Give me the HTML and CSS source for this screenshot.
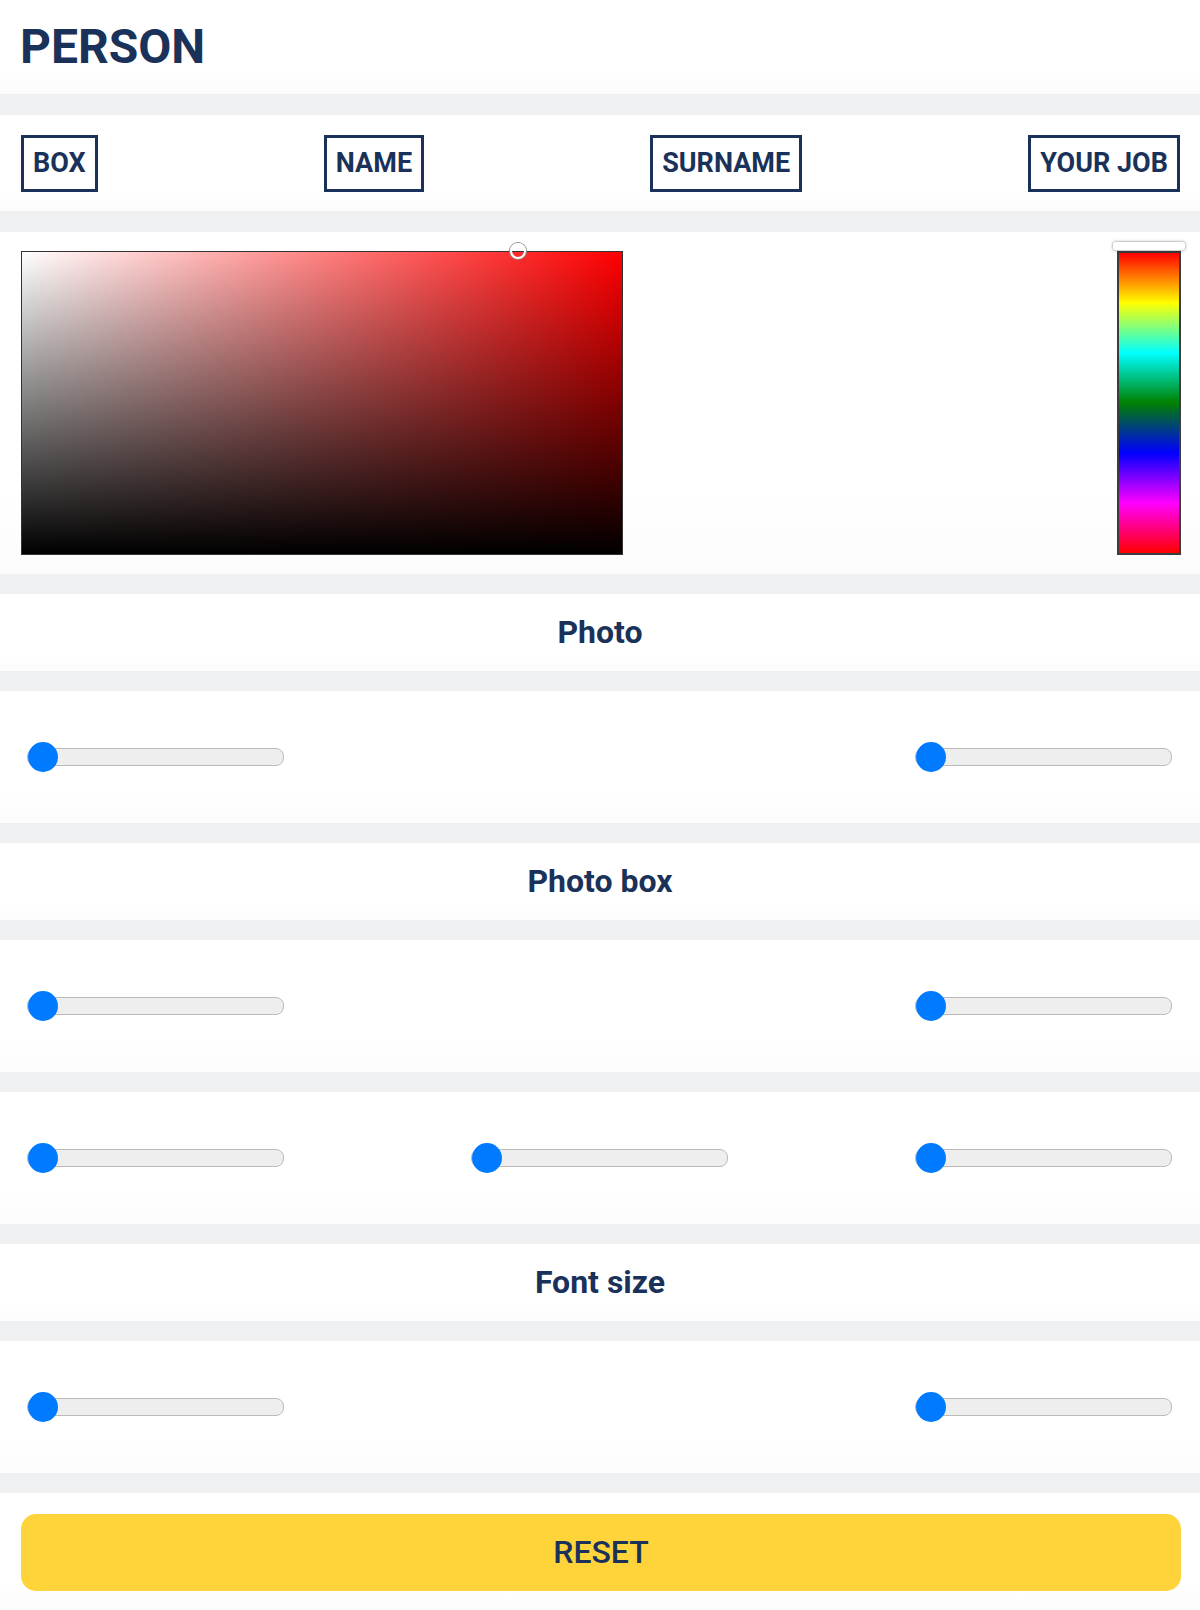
FILE: index.html
```html
<!DOCTYPE html>
<html lang="en">

<head>
    <meta charset="UTF-8">
    <meta name="viewport" content="width=device-width, initial-scale=1.0">
    <title>Person Card Editor</title>
    <link rel="stylesheet" href="styles.css">
</head>

<body>
    <!-- Title -->
    <header class="panel panel-title">
        <h1>PERSON</h1>
    </header>

    <!-- Part selector -->
    <section class="panel panel-tabs">
        <button class="tab">BOX</button>
        <button class="tab">NAME</button>
        <button class="tab">SURNAME</button>
        <button class="tab">YOUR JOB</button>
    </section>

    <!-- Colour picker -->
    <section class="panel panel-color">
        <div class="sv-box">
            <span class="sv-cursor"></span>
        </div>
        <div class="hue-bar">
            <span class="hue-handle"></span>
        </div>
    </section>

    <!-- Photo -->
    <section class="panel panel-heading">
        <h2>Photo</h2>
    </section>
    <section class="panel panel-sliders">
        <input type="range" class="slider" min="0" max="100" value="0">
        <input type="range" class="slider" min="0" max="100" value="0">
    </section>

    <!-- Photo box -->
    <section class="panel panel-heading">
        <h2>Photo box</h2>
    </section>
    <section class="panel panel-sliders">
        <input type="range" class="slider" min="0" max="100" value="0">
        <input type="range" class="slider" min="0" max="100" value="0">
    </section>
    <section class="panel panel-sliders">
        <input type="range" class="slider" min="0" max="100" value="0">
        <input type="range" class="slider" min="0" max="100" value="0">
        <input type="range" class="slider" min="0" max="100" value="0">
    </section>

    <!-- Font size -->
    <section class="panel panel-heading">
        <h2>Font size</h2>
    </section>
    <section class="panel panel-sliders">
        <input type="range" class="slider" min="0" max="100" value="0">
        <input type="range" class="slider" min="0" max="100" value="0">
    </section>

    <!-- Reset -->
    <section class="panel panel-reset">
        <button class="reset">RESET</button>
    </section>
</body>

</html>
```

FILE: styles.css
```css
body {
    font-family: Roboto, "Liberation Sans", Arial, sans-serif;
    background-color: #eff0f2;
    color: #1a3259;
    margin: 0;
    padding: 0;
}

.panel {
    background: linear-gradient(#ffffff 75%, #fcfcfc);
    margin-bottom: 20px;
}

.panel:last-child {
    margin-bottom: 0;
}

/* Title */
.panel-title {
    padding: 20px;
    margin-bottom: 21px;
}

h1 {
    margin: 0;
    font-size: 48px;
    line-height: 54px;
    font-weight: 700;
}

/* Part selector */
.panel-tabs {
    display: flex;
    justify-content: space-between;
    padding: 20px 20px 19px 21px;
    margin-bottom: 21px;
}

.tab {
    background: #ffffff;
    border: 3px solid #1a3259;
    color: #1a3259;
    font-family: inherit;
    font-size: 27px;
    font-weight: 700;
    line-height: 31px;
    padding: 10px 9px;
    margin: 0;
    cursor: pointer;
}

/* Colour picker */
.panel-color {
    display: flex;
    justify-content: space-between;
    align-items: flex-start;
    padding: 19px 19px 19px 21px;
}

.sv-box {
    position: relative;
    width: 600px;
    height: 302px;
    border: 1px solid #333333;
    background:
        linear-gradient(to top, #000000, rgba(0, 0, 0, 0)),
        linear-gradient(to right, #ffffff, #ff0000);
}

.sv-cursor {
    position: absolute;
    left: 488px;
    top: -9px;
    width: 12px;
    height: 12px;
    border: 2px solid #ffffff;
    border-radius: 50%;
    box-shadow: 0 0 0 1px #8a8a8a;
}

.hue-bar {
    position: relative;
    width: 60px;
    height: 300px;
    border: 2px solid #3c3c3c;
    background: linear-gradient(#ff0000, #ffff00, #00ffff, #008000, #0000ff, #ff00ff, #ff0000);
}

.hue-handle {
    position: absolute;
    left: -6px;
    right: -6px;
    top: -11px;
    height: 8px;
    background: #ffffff;
    border-radius: 2px;
    box-shadow: 0 0 3px rgba(0, 0, 0, 0.55);
}

/* Section headings */
.panel-heading {
    padding: 20px;
    text-align: center;
}

h2 {
    margin: 0;
    font-size: 32px;
    line-height: 37px;
    font-weight: 700;
}

/* Sliders */
.panel-sliders {
    display: flex;
    justify-content: space-between;
    align-items: center;
    height: 132px;
    padding: 0 28px 0 27px;
    box-sizing: border-box;
}

.slider {
    -webkit-appearance: none;
    appearance: none;
    width: 255px;
    height: 16px;
    margin: 0;
    background: #eeeeee;
    border: 1px solid #bbbbbb;
    border-radius: 8px;
    outline: none;
}

.slider::-webkit-slider-thumb {
    -webkit-appearance: none;
    appearance: none;
    width: 30px;
    height: 30px;
    border: none;
    border-radius: 50%;
    background: #007bff;
    cursor: pointer;
}

/* Reset */
.panel-reset {
    padding: 21px 19px 20px 21px;
}

.reset {
    display: block;
    width: 100%;
    background: #fed43a;
    color: #1a3259;
    border: none;
    border-radius: 15px;
    font-family: inherit;
    font-size: 32px;
    font-weight: 500;
    line-height: 37px;
    padding: 20px;
    cursor: pointer;
}
```
